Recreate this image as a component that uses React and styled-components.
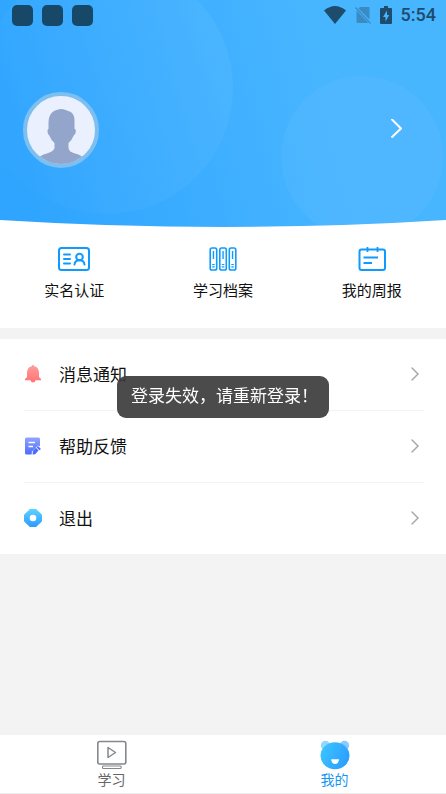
import styled, { createGlobalStyle } from 'styled-components'

const HeroBackdrop = () => (
  <Backdrop viewBox="0 0 446 228" preserveAspectRatio="none" aria-hidden="true">
    <defs>
      <linearGradient id="sky" gradientUnits="userSpaceOnUse" x1="30" y1="190" x2="330" y2="110">
        <stop offset="0" stopColor="#2fa5ff" />
        <stop offset="1" stopColor="#48b5ff" />
      </linearGradient>
      <linearGradient id="bubble" x1="0" y1="0.7" x2="1" y2="0.3">
        <stop offset="0" stopColor="#fff" stopOpacity="0.01" />
        <stop offset="1" stopColor="#fff" stopOpacity="0.05" />
      </linearGradient>
      <clipPath id="curve">
        <path d="M0 0H446V220Q223 234 0 220Z" />
      </clipPath>
    </defs>
    <g clipPath="url(#curve)">
      <rect width="446" height="228" fill="url(#sky)" />
      <circle cx="107" cy="88" r="126" fill="url(#bubble)" />
      <circle cx="362" cy="157" r="81" fill="#fff" fillOpacity="0.04" />
    </g>
  </Backdrop>
)

const WifiIcon = () => (
  <svg width="22" height="18" viewBox="0 0 22 18">
    <path d="M0 4.5Q11-4.5 22 4.5L11 18Z" fill="#1e4c6d" />
  </svg>
)

const NoSimIcon = () => (
  <svg width="16" height="18" viewBox="0 0 16 18">
    <path d="M5 1H13.5Q14.5 1 14.5 2V13.5L3.5 2.5ZM1.5 4.5L13.5 17H2.5Q1.5 17 1.5 16Z" fill="#3a8bc4" />
    <path d="M0.5 1.5L15.5 17.5" stroke="#3a8bc4" strokeWidth="1.2" />
  </svg>
)

const BatteryIcon = () => (
  <svg width="12" height="18" viewBox="0 0 12 18">
    <path d="M4 0H8V2H11Q12 2 12 3V17Q12 18 11 18H1Q0 18 0 17V3Q0 2 1 2H4Z" fill="#1e4c6d" />
    <path d="M7 4.5L3 11H5.5V15.5L9.2 9H7Z" fill="#48b5ff" />
  </svg>
)

const Person = () => (
  <svg width="68" height="68" viewBox="0 0 68 68">
    <path
      d="M34 13C37 13 39 14 41 15C46 16 48 20 47.5 27V33Q49.5 33 48.5 37Q48 39 47 39Q45 44 41.5 47V52Q42 56 48 57.5Q55 59 61 65V68H7V65Q13 59 20 57.5Q27 55 27.5 52V47Q24 44 22 39Q20.5 38 20.5 35Q20.5 33 21.5 33V26Q22 14 34 13Z"
      fill="#93a5ca"
    />
  </svg>
)

const Chevron = ({ large }) => (
  <svg width={large ? 14 : 10} height={large ? 22 : 16} viewBox={large ? '0 0 14 22' : '0 0 10 16'}>
    {large ? (
      <path d="M2.500 0L12 9.500L2.500 18.500" fill="none" stroke="#fff" strokeWidth="2" strokeLinejoin="round" />
    ) : (
      <path d="M2 2L8 8L2 14" fill="none" stroke="#aaa" strokeWidth="1.5" strokeLinecap="round" />
    )}
  </svg>
)

const IdCardIcon = () => (
  <svg width="32" height="24" viewBox="0 0 32 24" fill="none" stroke="#0f9aff" strokeWidth="2" strokeLinecap="round">
    <rect x="1" y="1" width="30" height="22" rx="2.5" />
    <path d="M6 7.5H12M6 12H12M6 16.5H12" />
    <circle cx="21.5" cy="10" r="3.3" />
    <path d="M16.5 17.5Q17 13.3 21.5 13.3Q26 13.3 26.5 17.5" />
  </svg>
)

const BindersIcon = () => (
  <svg width="28" height="24" viewBox="0 0 28 24" fill="none" stroke="#0f9aff">
    {[1.2, 10.8, 20.3].map((x) => (
      <g key={x}>
        <rect x={x} y="1" width="6.5" height="22" rx="1.8" strokeWidth="1.6" />
        <path d={`M${x + 3.25} 4V12`} strokeWidth="1.4" />
        <path d={`M${x + 2} 17.5H${x + 4.5}M${x + 2} 19.8H${x + 4.5}`} strokeWidth="1.2" />
      </g>
    ))}
  </svg>
)

const ReportIcon = () => (
  <svg width="28" height="24" viewBox="0 0 28 24" fill="none" stroke="#0f9aff" strokeWidth="2">
    <rect x="1.5" y="2.5" width="25.500" height="20.5" rx="2" />
    <path d="M9.5 0V5M19.5 0V5M5.500 10.5H20M5.500 16H14" strokeWidth="1.8" />
  </svg>
)

const BellIcon = () => (
  <svg width="18" height="18" viewBox="0 0 18 18">
    <defs>
      <linearGradient id="bell" x1="0" y1="0" x2="0" y2="1">
        <stop offset="0" stopColor="#ff9d9d" />
        <stop offset="1" stopColor="#ff7373" />
      </linearGradient>
    </defs>
    <path
      d="M9 0Q10 0 10.3 1.3Q15 2.5 15 8V12L17 14V15.2H11.5Q11 17.5 9 17.5Q7 17.5 6.5 15.2H1V14L3 12V8Q3 2.5 7.7 1.3Q8 0 9 0Z"
      fill="url(#bell)"
    />
  </svg>
)

const FeedbackIcon = () => (
  <svg width="18" height="18" viewBox="0 0 18 18">
    <defs>
      <linearGradient id="note" x1="0" y1="0" x2="0" y2="1">
        <stop offset="0" stopColor="#91a5ff" />
        <stop offset="1" stopColor="#4c6cfb" />
      </linearGradient>
    </defs>
    <rect x="1" y="0.5" width="15" height="17" rx="1.5" fill="url(#note)" />
    <path d="M4.5 5.5H11M4.5 9.5H9" stroke="#fff" strokeWidth="1.4" />
    <path d="M7.5 18L8 14.5L14 8.500L18 10V18Z" fill="#fff" />
    <path d="M8.500 17.500L9 13.8L12 10.800L14.500 13.400L11.2 17.2ZM12.7 10.2L14 9L17 12L15.200 13.3Z" fill="#4c6cfb" />
  </svg>
)

const ExitIcon = () => (
  <svg width="18" height="18" viewBox="0 0 18 18">
    <defs>
      <linearGradient id="exit" x1="0" y1="0" x2="0" y2="1">
        <stop offset="0" stopColor="#5bd2ff" />
        <stop offset="1" stopColor="#2d9bff" />
      </linearGradient>
    </defs>
    <path
      d="M6 0.5H12L17.5 5.7V12.3L12 17.5H6L0.5 12.3V5.7Z"
      fill="url(#exit)"
      stroke="url(#exit)"
      strokeLinejoin="round"
    />
    <circle cx="9" cy="9" r="3.3" fill="#fff" />
  </svg>
)

const StudyIcon = () => (
  <svg width="30" height="30" viewBox="0 0 30 30" fill="none" stroke="#85878b">
    <rect x="0.800" y="1.5" width="28" height="22.5" rx="2" strokeWidth="1.6" />
    <path d="M11 7.5V17.5L18.5 12.5Z" strokeWidth="1.5" strokeLinejoin="round" />
    <rect x="5.5" y="26" width="18.6" height="2.5" rx="0.8" strokeWidth="1.1" />
  </svg>
)

const BearIcon = () => (
  <svg width="30" height="30" viewBox="0 0 30 30">
    <defs>
      <linearGradient id="bear" x1="0" y1="0.3" x2="1" y2="0.7">
        <stop offset="0" stopColor="#3bc4ff" />
        <stop offset="1" stopColor="#2b9cff" />
      </linearGradient>
    </defs>
    <circle cx="5.5" cy="5.5" r="4.7" fill="#94d7fd" />
    <circle cx="24.5" cy="5.5" r="4.7" fill="#8acbff" />
    <ellipse cx="15" cy="15.7" rx="14.5" ry="13.5" fill="url(#bear)" />
    <path d="M11.2 19.3H19Q18.7 24 15.1 24Q11.5 24 11.2 19.3Z" fill="#fff" />
  </svg>
)

const shortcuts = [
  { label: '实名认证', icon: <IdCardIcon /> },
  { label: '学习档案', icon: <BindersIcon /> },
  { label: '我的周报', icon: <ReportIcon /> },
]

const menu = [
  { label: '消息通知', icon: <BellIcon /> },
  { label: '帮助反馈', icon: <FeedbackIcon /> },
  { label: '退出', icon: <ExitIcon /> },
]

export default function App() {
  return (
    <>
      <GlobalStyle />
      <Page>
        <Hero>
          <HeroBackdrop />
          <StatusBar>
            <Notices>
              <Notice />
              <Notice />
              <Notice />
            </Notices>
            <WifiIcon />
            <NoSimIcon />
            <BatteryIcon />
            <Clock>5:54</Clock>
          </StatusBar>
          <Profile type="button" aria-label="个人资料">
            <Avatar>
              <Person />
            </Avatar>
            <Chevron large />
          </Profile>
        </Hero>

        <Shortcuts>
          {shortcuts.map(({ label, icon }) => (
            <Shortcut key={label} type="button">
              {icon}
              {label}
            </Shortcut>
          ))}
        </Shortcuts>

        <Menu>
          {menu.map(({ label, icon }) => (
            <MenuItem key={label}>
              <MenuButton type="button">
                {icon}
                <MenuLabel>{label}</MenuLabel>
                <Chevron />
              </MenuButton>
            </MenuItem>
          ))}
        </Menu>

        <TabBar>
          <Tab href="#study">
            <StudyIcon />
            学习
          </Tab>
          <Tab href="#mine" $active aria-current="page">
            <BearIcon />
            我的
          </Tab>
        </TabBar>

        <Toast role="status">登录失效，请重新登录！</Toast>
      </Page>
    </>
  )
}

const GlobalStyle = createGlobalStyle`
  * {
    box-sizing: border-box;
  }

  body {
    margin: 0;
    background: #f3f3f3;
    color: #111;
    font-family: 'Noto Sans CJK SC', sans-serif;
  }

  svg {
    display: block;
    flex-shrink: 0;
  }

  button {
    padding: 0;
    border: 0;
    background: none;
    color: inherit;
    font: inherit;
    cursor: pointer;
  }
`

const Page = styled.div`
  position: relative;
  display: flex;
  flex-direction: column;
  min-height: 100vh;
`

const Hero = styled.header`
  position: relative;
  isolation: isolate;
  padding-bottom: 60px;
  background: #fff;
`

const Backdrop = styled.svg`
  position: absolute;
  inset: 0;
  z-index: -1;
  width: 100%;
  height: 100%;
`

const StatusBar = styled.div`
  display: flex;
  align-items: center;
  gap: 9px;
  height: 30px;
  padding: 0 10px 0 12px;
`

const Notices = styled.div`
  display: flex;
  flex: 1;
  gap: 9px;
`

const Notice = styled.span`
  width: 21px;
  height: 21px;
  border-radius: 5px;
  background: #184868;
`

const Clock = styled.span`
  color: #1e4c6d;
  font-family: Roboto, sans-serif;
  font-size: 18px;
  font-weight: 500;
  line-height: 20px;
`

const Profile = styled.button`
  display: flex;
  align-items: center;
  justify-content: space-between;
  width: 100%;
  margin-top: 62px;
  padding: 0 43px 0 23px;
`

const Avatar = styled.span`
  overflow: hidden;
  border: 4px solid #7dc0f0;
  border-radius: 50%;
  background: #ebf0ff;
`

const Shortcuts = styled.nav`
  display: flex;
  padding: 19px 0 26px;
  background: #fff;
`

const Shortcut = styled.button`
  display: flex;
  flex: 1;
  flex-direction: column;
  align-items: center;
  gap: 7px;
  font-size: 15px;
  line-height: 24px;
`

const Menu = styled.ul`
  margin: 11px 0 0;
  padding: 0 22px 0 24px;
  background: #fff;
  list-style: none;
`

const MenuItem = styled.li`
  & + & {
    border-top: 1px solid #f3f3f3;
  }
`

const MenuButton = styled.button`
  display: flex;
  align-items: center;
  width: 100%;
  height: 71px;
  padding: 0 4px 2px 0;
`

const MenuLabel = styled.span`
  flex: 1;
  padding-left: 17px;
  font-size: 17px;
  line-height: 24px;
  text-align: left;
`

const TabBar = styled.nav`
  display: flex;
  margin-top: auto;
  padding: 5px 0 4px;
  border-bottom: 1px solid #eee;
  background: #fff;
`

const Tab = styled.a`
  display: flex;
  flex: 1;
  flex-direction: column;
  align-items: center;
  color: ${({ $active }) => ($active ? '#1296f5' : '#666')};
  font-size: 14px;
  line-height: 19px;
  text-decoration: none;
`

const Toast = styled.div`
  position: fixed;
  top: 376px;
  left: 50%;
  padding: 7px 11px 11px 14px;
  border-radius: 9px;
  background: rgba(60, 60, 60, 0.92);
  color: #fff;
  font-size: 17px;
  line-height: 24px;
  white-space: nowrap;
  transform: translateX(-50%);
`
